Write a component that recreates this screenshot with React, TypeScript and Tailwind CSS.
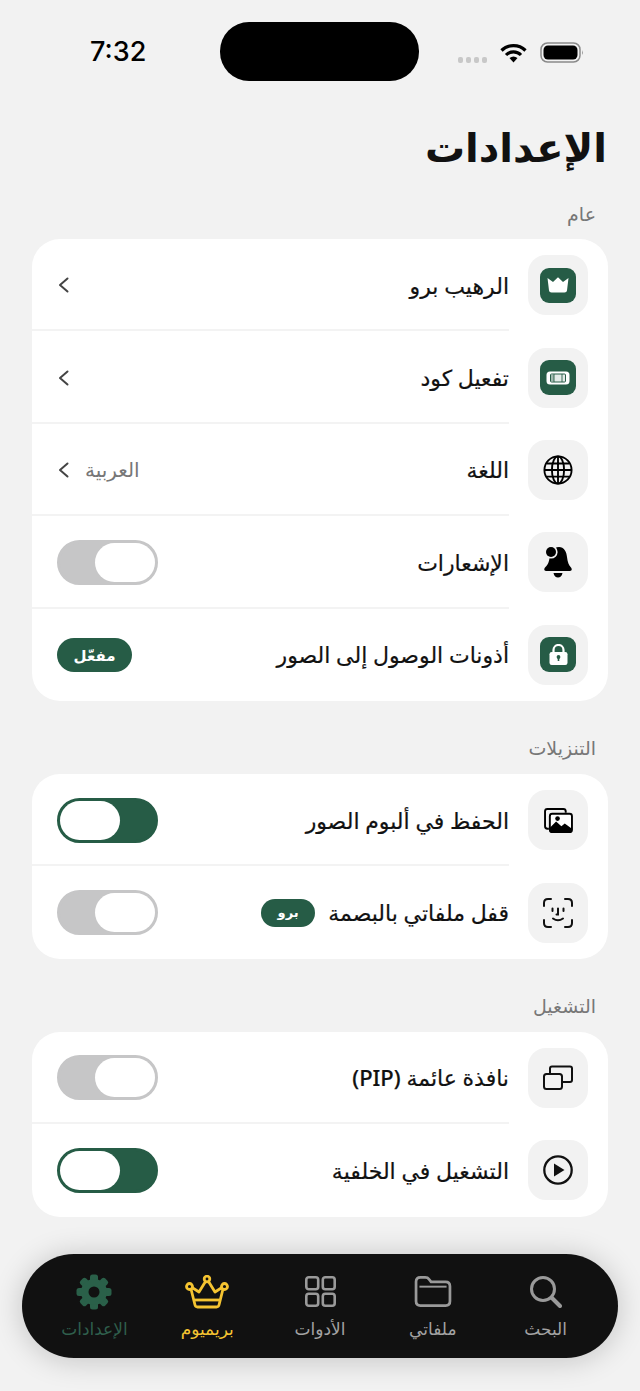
import React from "react";

const GREEN = "#265c46";

function GreenTile({ children }: { children: React.ReactNode }) {
  return <div className="w-[36px] h-[35px] rounded-[9px] bg-[#265c46] flex items-center justify-center">{children}</div>;
}

const CrownSquare = () => (
  <GreenTile>
    <svg width="22" height="16" viewBox="0 0 22 16" fill="#fff">
      <path d="M.5 1 6 5 11 .2 16 5 21.500 1 20 13.500Q19.800 15.500 17.500 15.500H4.500Q2.200 15.500 2 13.500Z" />
    </svg>
  </GreenTile>
);
const Ticket = () => (
  <GreenTile>
    <svg width="24" height="14" viewBox="0 0 24 14">
      <rect x="0.500" y="0.500" width="23" height="13" rx="3.500" fill="#fff" />
      <rect x="4.500" y="3" width="15" height="8" rx="1" fill="#e4ebe8" stroke={GREEN} strokeWidth="1" />
      <path d="M8 3v8M16 3v8" stroke={GREEN} strokeWidth=".9" />
      <path d="M5 5h3M5 7h3M5 9h3" stroke={GREEN} strokeWidth=".7" />
    </svg>
  </GreenTile>
);
const Globe = () => (
  <svg width="30" height="30" viewBox="0 0 32 32" fill="none" stroke="#000" strokeWidth="2">
    <circle cx="16" cy="16" r="14.500" />
    <ellipse cx="16" cy="16" rx="6.500" ry="14.500" />
    <path d="M16 2v28M2 16h28M4 9h24M4 23h24" />
  </svg>
);
const Bell = () => (
  <svg width="28" height="32" viewBox="0 0 28 32">
    <path d="M15 1C20 1 22.500 5.500 23 11 23.500 16 25 19.500 27 21.500 28.500 23.500 27.500 25 26 25H2C.5 25-.5 23.500 1 21.500 3 19.500 5 17 5.500 12 6 6 9 1 15 1Z" fill="#000" />
    <circle cx="7" cy="6" r="6.600" fill="#f2f2f2" />
    <circle cx="7" cy="6" r="5" fill="#000" />
    <path d="M9.500 27H18.500C18 30 16 31.500 14 31.500 12 31.500 10 30 9.500 27Z" fill="#000" />
  </svg>
);
const Lock = () => (
  <GreenTile>
    <svg width="19" height="21" viewBox="0 0 19 21">
      <path d="M4.500 9V6a5 5 0 0 1 10 0v3" fill="none" stroke="#fff" strokeWidth="2.200" />
      <rect x="0.500" y="8" width="18" height="13" rx="2.200" fill="#fff" />
      <circle cx="9.500" cy="13" r="1.900" fill={GREEN} />
      <path d="M8.700 13.500h1.600v3.500h-1.600z" fill={GREEN} />
    </svg>
  </GreenTile>
);
const Photos = () => (
  <svg width="29" height="25" viewBox="0 0 30 26" fill="none">
    <path d="M5 21.500H3.500Q1 21.500 1 19V3.500Q1 1 3.500 1H20Q22.500 1 22.500 3.500V5" stroke="#000" strokeWidth="2" />
    <rect x="6" y="6" width="23" height="19" rx="2.500" fill="#fff" stroke="#000" strokeWidth="2" />
    <path d="M6 25V20.500L12.500 14 18 19 21.500 16 29 21.500V25Z" fill="#000" />
    <circle cx="14" cy="11" r="2.400" fill="#000" />
  </svg>
);
const Face = () => (
  <svg width="30" height="30" viewBox="0 0 30 30" fill="none" stroke="#111" strokeWidth="2" strokeLinecap="round">
    <path d="M1 8V5Q1 1 5 1H8M22 1H25Q29 1 29 5V8M1 22V25Q1 29 5 29H8M22 29H25Q29 29 29 25V22" />
    <path d="M9.500 10.500V13M20.500 10.500V13M15 10.500V16.500H13.500M10 20.500Q15 24 20 20.500" />
  </svg>
);
const Pip = () => (
  <svg width="30" height="25" viewBox="0 0 30 25" fill="none" stroke="#111" strokeWidth="2">
    <path d="M7 9V3.500Q7 1.500 9 1.500H27Q29 1.500 29 3.500V15Q29 17 27 17H19" />
    <rect x="1" y="9" width="18" height="15" rx="2.500" />
  </svg>
);
const Play = () => (
  <svg width="30" height="30" viewBox="0 0 30 30">
    <circle cx="15" cy="15" r="13.700" fill="none" stroke="#111" strokeWidth="2.300" />
    <path d="M11 8.500 21.500 15 11 21.500Z" fill="#111" />
  </svg>
);

const Chevron = () => (
  <svg width="14" height="18" viewBox="0 0 14 18" fill="none" stroke="#444" strokeWidth="2" strokeLinecap="round" strokeLinejoin="round">
    <path d="M10.500 2.500 3 9l7.500 6.500" />
  </svg>
);

function Toggle({ on }: { on?: boolean }) {
  return (
    <div
      className={`w-[101px] h-[45px] rounded-full border-[3px] flex items-center ${
        on ? "justify-end bg-[#265c46] border-[#265c46]" : "justify-start bg-[#c6c6c7] border-[#c6c6c7]"
      }`}
    >
      <div className="w-[60px] h-[39px] rounded-full bg-white" />
    </div>
  );
}

function Row({
  icon,
  label,
  badge,
  end,
  last,
}: {
  icon: React.ReactNode;
  label: string;
  badge?: string;
  end?: React.ReactNode;
  last?: boolean;
}) {
  return (
    <div className="h-[92.400px] flex items-center pr-[20px]">
      <div className="w-[60px] h-[60px] shrink-0 rounded-[18px] bg-[#f2f2f2] flex items-center justify-center">{icon}</div>
      <div className={`flex-1 self-stretch flex items-center mr-[19px] pl-[25px] ${last ? "" : "pt-[2px] border-b-2 border-[#f3f3f3]"}`}>
        <span className="text-[22px] font-medium text-[#111] whitespace-nowrap [-webkit-text-stroke:0.2px_#111]">{label}</span>
        {badge && (
          <span className="mr-[13px] w-[54px] h-[28px] rounded-full bg-[#265c46] text-white text-[13px] font-bold flex items-center justify-center">
            {badge}
          </span>
        )}
        <div className="mr-auto flex items-center">{end}</div>
      </div>
    </div>
  );
}

function Section({ title, children }: { title: string; children: React.ReactNode }) {
  return (
    <section className="mt-[34px]">
      <h2 className="h-[39px] pr-[44px] text-[19px] leading-[26px] font-normal text-[#777]">{title}</h2>
      <div className="mx-[32px] bg-white rounded-[28px] overflow-hidden">{children}</div>
    </section>
  );
}

function NavItem({ icon, label, color }: { icon: React.ReactNode; label: string; color: string }) {
  return (
    <div className="flex-1 flex flex-col items-center">
      <div className="h-[38px] flex items-center justify-center">{icon}</div>
      <span className="mt-[6px] text-[17px] leading-[24px] whitespace-nowrap" style={{ color }}>
        {label}
      </span>
    </div>
  );
}

const TEETH = [0, 45, 90, 135, 180, 225, 270, 315];

export default function App() {
  return (
    <div
      dir="rtl"
      className="w-[640px] h-[1391px] overflow-hidden bg-[#f2f2f2]"
      style={{ fontFamily: '"Noto Sans", "DejaVu Sans", sans-serif' }}
    >
      <div dir="ltr" className="h-[103px] pt-[22px] pl-[90px] pr-[56px] flex items-start">
        <span className="w-[130px] h-[59px] pt-[2px] flex items-center text-[27px] font-medium text-black" style={{ fontFamily: "Inter, sans-serif" }}>
          7:32
        </span>
        <div className="w-[200px] h-[59px] rounded-[29px] bg-black" />
        <div className="flex-1 h-[59px] flex items-center pl-[39px] pt-[2px]">
          <div className="flex gap-[3px] mt-[15px]">
            <i className="w-[5px] h-[6px] rounded-[2px] bg-[#c8c8c8]" />
            <i className="w-[5px] h-[6px] rounded-[2px] bg-[#c8c8c8]" />
            <i className="w-[5px] h-[6px] rounded-[2px] bg-[#c8c8c8]" />
            <i className="w-[5px] h-[6px] rounded-[2px] bg-[#c8c8c8]" />
          </div>
          <svg className="ml-[13px]" width="27" height="20" viewBox="0 0 27 20" fill="none" stroke="#000" strokeWidth="3.200">
            <path d="M1.500 7.500a17 17 0 0 1 24 0M6 12a10.500 10.500 0 0 1 15 0" />
            <path d="M9.500 15 13.500 19.500l4-4.500Q13.500 12 9.500 15Z" fill="#000" stroke="none" />
          </svg>
          <svg className="ml-[13px]" width="44" height="21" viewBox="0 0 44 21">
            <rect x="1" y="1" width="39" height="19" rx="6.500" fill="none" stroke="#8a8a8a" strokeWidth="1.500" />
            <rect x="3.500" y="3.500" width="34" height="14" rx="4.500" fill="#000" />
            <path d="M42 8q1.500 2.500 0 5z" fill="#8a8a8a" />
          </svg>
        </div>
      </div>

      <h1 className="h-[96px] pr-[33px] text-[40px] leading-[88px] font-extrabold text-[#111]">الإعدادات</h1>

      <h2 className="h-[40px] pr-[44px] text-[19px] leading-[30px] font-normal text-[#777]">عام</h2>
      <div className="mx-[32px] bg-white rounded-[28px] overflow-hidden">
        <Row icon={<CrownSquare />} label="الرهيب برو" end={<Chevron />} />
        <Row icon={<Ticket />} label="تفعيل كود" end={<Chevron />} />
        <Row
          icon={<Globe />}
          label="اللغة"
          end={
            <>
              <span className="text-[20px] text-[#777] ml-[14px]">العربية</span>
              <Chevron />
            </>
          }
        />
        <Row icon={<Bell />} label="الإشعارات" end={<Toggle />} />
        <Row
          icon={<Lock />}
          label="أذونات الوصول إلى الصور"
          last
          end={
            <span className="w-[75px] h-[34px] rounded-full bg-[#265c46] text-white text-[15px] font-bold flex items-center justify-center">مفعّل</span>
          }
        />
      </div>

      <Section title="التنزيلات">
        <Row icon={<Photos />} label="الحفظ في ألبوم الصور" end={<Toggle on />} />
        <Row icon={<Face />} label="قفل ملفاتي بالبصمة" badge="برو" end={<Toggle />} last />
      </Section>

      <Section title="التشغيل">
        <Row icon={<Pip />} label="نافذة عائمة (PIP)" end={<Toggle />} />
        <Row icon={<Play />} label="التشغيل في الخلفية" end={<Toggle on />} last />
      </Section>

      <nav className="mt-[37px] mx-[22px] h-[104px] rounded-[52px] bg-[#111] px-[16px] pt-[19px] flex shadow-[0_2px_30px_rgba(0,0,0,0.2)]">
        <NavItem
          color="#a3a3a3"
          label="البحث"
          icon={
            <svg width="32" height="32" viewBox="0 0 32 32" fill="none" stroke="#9a9a9a" strokeWidth="3" strokeLinecap="round">
              <circle cx="13" cy="13" r="11.500" />
              <path d="M22 22 30 30" strokeWidth="4" />
            </svg>
          }
        />
        <NavItem
          color="#a3a3a3"
          label="ملفاتي"
          icon={
            <svg width="38" height="31" viewBox="0 0 38 32" fill="none" stroke="#9a9a9a" strokeWidth="2.800" strokeLinejoin="round">
              <path d="M1.500 6Q1.500 1.500 6 1.500H11Q13.500 1.500 15 3.500L17 6H32Q36.500 6 36.500 10.500V26Q36.500 30.500 32 30.500H6Q1.500 30.500 1.500 26Z" />
              <path d="M5 11H33" strokeWidth="2" />
            </svg>
          }
        />
        <NavItem
          color="#a3a3a3"
          label="الأدوات"
          icon={
            <svg width="31" height="31" viewBox="0 0 31 31" fill="none" stroke="#9a9a9a" strokeWidth="2.600">
              <rect x="1.300" y="1.300" width="11.900" height="11.900" rx="2.500" />
              <rect x="17.800" y="1.300" width="11.900" height="11.900" rx="2.500" />
              <rect x="1.300" y="17.800" width="11.900" height="11.900" rx="2.500" />
              <rect x="17.800" y="17.800" width="11.900" height="11.900" rx="2.500" />
            </svg>
          }
        />
        <NavItem
          color="#f5c431"
          label="بريميوم"
          icon={
            <svg width="44" height="34" viewBox="0 0 44 34" fill="none" stroke="#f5c431" strokeWidth="2.800" strokeLinejoin="round">
              <circle cx="22" cy="4" r="2.800" />
              <circle cx="4.500" cy="11.500" r="3" />
              <circle cx="39.500" cy="11.500" r="3" />
              <path d="M20.500 6.500 14 17 7 12.500M23.500 6.500 30 17 37 12.500M6 14 10 30Q10.500 32 12.500 32H31.500Q33.500 32 34 30L38 14" />
              <path d="M9.500 25H34.500" />
            </svg>
          }
        />
        <NavItem
          color="#2f5f4c"
          label="الإعدادات"
          icon={
            <svg width="36" height="36" viewBox="0 0 36 36">
              {TEETH.map((a) => (
                <rect key={a} x="14" y="0.500" width="8" height="10" rx="2.500" fill="#2a6049" transform={`rotate(${a} 18 18)`} />
              ))}
              <circle cx="18" cy="18" r="13" fill="#2a6049" />
              <circle cx="18" cy="18" r="5.500" fill="#111" />
            </svg>
          }
        />
      </nav>
    </div>
  );
}
